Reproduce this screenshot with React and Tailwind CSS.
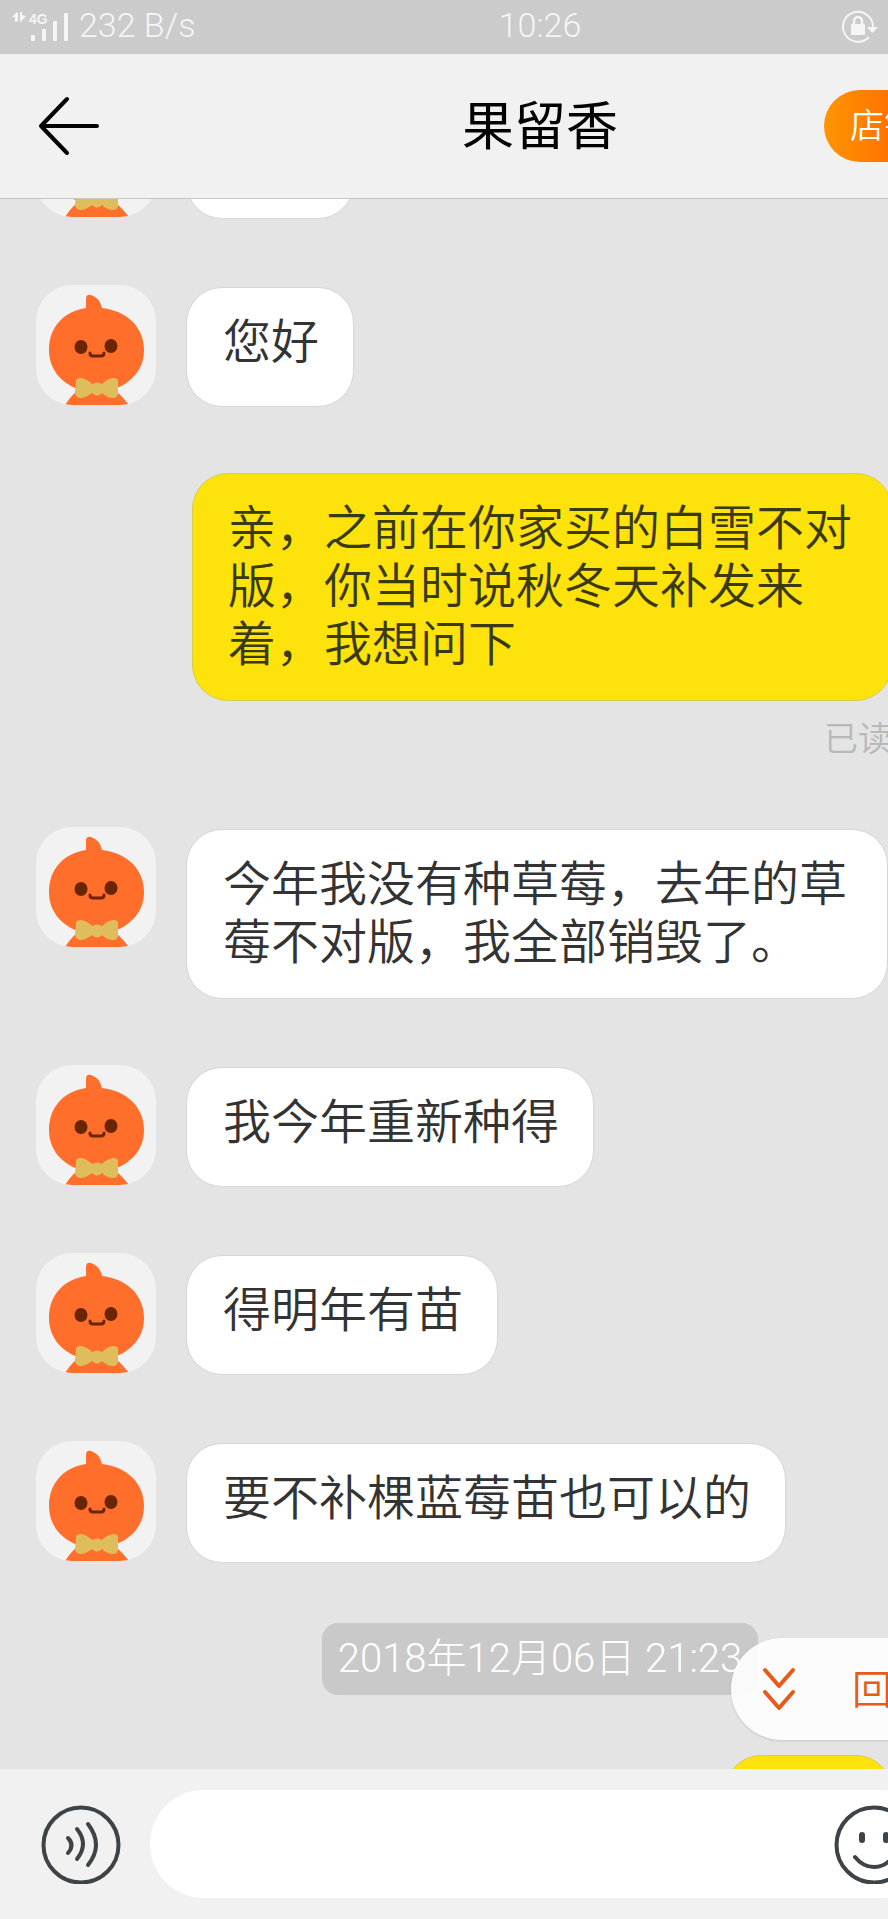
import React, { useState } from 'react';

const MESSAGES = [
  { id: 1, from: 'shop', text: '' },
  { id: 2, from: 'shop', text: '您好' },
  { id: 3, from: 'me', text: '亲，之前在你家买的白雪不对版，你当时说秋冬天补发来着，我想问下', read: true },
  { id: 4, from: 'shop', text: '今年我没有种草莓，去年的草莓不对版，我全部销毁了。' },
  { id: 5, from: 'shop', text: '我今年重新种得' },
  { id: 6, from: 'shop', text: '得明年有苗' },
  { id: 7, from: 'shop', text: '要不补棵蓝莓苗也可以的' },
];

function Avatar() {
  return (
    <svg viewBox="0 0 120 120" className="size-[120px] shrink-0 rounded-[36px] bg-[#f2f2f2]" aria-hidden="true">
      {/* body */}
      <path d="M29 120 Q38 106 48 102 L74 102 Q83 107 93 120 Z" fill="#ff6e2a" />
      {/* head and stem */}
      <path d="M50 23 L50 14 Q50 9 55 10 Q64 13 66 23 C91 26 108 42 108 65 C108 85 95 98 78 104 L42 104 C25 98 13 84 13 65 C13 41 29 26 50 23 Z" fill="#ff6e2a" />
      <ellipse cx="45" cy="62" rx="6.5" ry="7" fill="#6b2400" />
      <ellipse cx="75" cy="61" rx="6.5" ry="7" fill="#6b2400" />
      <path d="M54 68 Q54 71 57 71 L65 71 Q68 71 68 68" fill="none" stroke="#6b2400" strokeWidth="3" strokeLinecap="round" />
      {/* bow tie */}
      <path d="M40 98 Q39 93 45 93 Q51 94 56 99 Q61 96 66 99 Q71 94 77 93 Q83 93 82 98 L82 108 Q82 113 77 113 Q71 113 66 108 Q61 113 56 108 Q50 113 44 113 Q39 112 39 107 Z" fill="#e0bd5c" />
    </svg>
  );
}

function ShopMessage({ text }) {
  return (
    <li className="flex items-start gap-[30px] pl-9">
      <Avatar />
      <p className="mt-0.5 min-h-[120px] min-w-[168px] max-w-[702px] rounded-[36px] border border-[#d6d6d6] bg-white pt-[21px] pr-[34px] pb-[31px] pl-9 text-[48px] leading-[58px] text-[#333]">
        {text}
      </p>
    </li>
  );
}

function MyMessage({ text, read }) {
  return (
    <li className="flex flex-col items-end pr-[188px]">
      <p className="min-h-[120px] min-w-[167px] max-w-[700px] rounded-[36px] border border-[#d9cc4e] bg-[#fde20c] pt-[21px] pr-[33px] pb-[31px] pl-[35px] text-[48px] leading-[58px] text-[#3a3a10]">
        {text}
      </p>
      {read && <span className="mt-3 leading-[48px] text-[34px] text-[#b8b8b8]">已读</span>}
    </li>
  );
}

function StatusBar() {
  return (
    <div className="grid h-[54px] shrink-0 grid-cols-[1fr_auto_1fr] items-center bg-[#cbcbcb] font-[Roboto,sans-serif] text-[34px] leading-[50px] text-[#f5f5f5]">
      <div className="flex items-center gap-[9px] pl-3">
        <svg viewBox="0 0 58 32" className="h-8 w-[58px]" fill="currentColor" aria-hidden="true">
          <path d="M0 6 L5 1 V11 H3 V6 Z M8 1 H10 V4 L14 5 L9 11 H8 Z M5 2 H6 V10 H5 Z" />
          <text x="17" y="13" fontSize="14" fontWeight="700" fontFamily="Liberation Sans">4G</text>
          <rect x="19" y="24" width="4" height="6" rx="1" />
          <rect x="30" y="18" width="4" height="12" rx="1" />
          <rect x="41" y="10" width="4" height="20" rx="1" />
          <rect x="52" y="2" width="4" height="28" rx="1" />
        </svg>
        <span className="pb-1 font-light">232 B/s</span>
      </div>
      <span className="pb-1 font-light">10:26</span>
      <svg viewBox="0 0 38 34" className="mr-[201px] h-[34px] w-[38px] justify-self-end" fill="none" stroke="currentColor" aria-hidden="true">
        <path d="M28 27 A15 15 0 1 1 32 17" strokeWidth="2" />
        <path d="M26 17 H37 L31.500 23 Z" fill="currentColor" stroke="none" />
        <rect x="10" y="14" width="14" height="11" rx="1" fill="currentColor" stroke="none" />
        <path d="M13 15 V11 A4 4 0 0 1 21 11 V15" strokeWidth="2.500" />
      </svg>
    </div>
  );
}

export default function App() {
  const [draft, setDraft] = useState('');

  return (
    <div className="h-screen overflow-hidden bg-[#e4e4e4] font-['Noto_Sans_CJK_SC',sans-serif] font-[350]">
      <div className="flex h-full min-w-[1080px] flex-col">
        <StatusBar />

        {/* Header */}
        <header className="grid h-[145px] shrink-0 grid-cols-[1fr_auto_1fr] items-center border-b border-[#c8c8c8] bg-[#f1f1f1]">
          <button type="button" aria-label="返回" className="ml-[37px] justify-self-start">
            <svg viewBox="0 0 64 60" className="h-[60px] w-16" fill="none" stroke="#000" strokeWidth="4" strokeLinecap="round" strokeLinejoin="round">
              <path d="M30 3 L4 30 L30 57 M4 30 H60" />
            </svg>
          </button>
          <h1 className="pb-1.5 text-[52px] leading-[72px] font-normal text-black">果留香</h1>
          <button
            type="button"
            className="mr-[136px] h-[72px] w-[120px] justify-self-end rounded-full bg-linear-to-r from-[#ff9500] to-[#ff5000] pb-1 text-[34px] leading-[68px] text-white"
          >
            店铺
          </button>
        </header>

        {/* Messages */}
        <main className="relative min-h-0 flex-1 overflow-hidden">
          <ul className="-mt-[102px] flex flex-col gap-[66px]">
            {MESSAGES.map((m) =>
              m.from === 'me' ? (
                <MyMessage key={m.id} text={m.text} read={m.read} />
              ) : (
                <ShopMessage key={m.id} text={m.text} />
              )
            )}
          </ul>
          <div className="my-[60px] flex justify-center">
            <time
              dateTime="2018-12-06T21:23"
              className="rounded-2xl bg-[#c9c9c9] px-4 font-[Roboto,'Noto_Sans_CJK_SC',sans-serif] text-[40px] font-light leading-[72px] text-white"
            >
              2018年12月06日 21:23
            </time>
          </div>
          <ul>
            <MyMessage text="" />
          </ul>

          <button
            type="button"
            className="absolute right-0 bottom-[29px] flex h-[102px] w-[349px] items-center gap-[54px] rounded-l-full bg-white/90 pl-[29px] text-[40px] text-[#e85a18] shadow-sm"
          >
            <svg viewBox="0 0 38 48" className="h-12 w-[38px]" fill="none" stroke="currentColor" strokeWidth="4" strokeLinecap="round" strokeLinejoin="round" aria-hidden="true">
              <path d="M5 5 L19 21 L33 5 M5 27 L19 43 L33 27" />
            </svg>
            <span className="pb-1 leading-[60px]">回</span>
          </button>
        </main>

        {/* Composer */}
        <form className="flex h-[150px] shrink-0 items-center bg-[#f1f1f1] pr-[146px] pl-[41px] text-[#3d4347]">
          <button type="button" aria-label="语音" className="mr-[29px]">
            <svg viewBox="0 0 80 80" className="size-20" fill="none" stroke="currentColor" strokeWidth="4" strokeLinecap="round">
              <circle cx="40" cy="41" r="37.500" />
              <path d="M27 34 Q34 41 27 49 M36 25 Q48 40 36 55 M47 20 Q63 41 47 61" />
            </svg>
          </button>
          <div className="flex h-[108px] flex-1 items-center rounded-full bg-white pr-5 pl-10">
            <input
              aria-label="消息"
              value={draft}
              onChange={(e) => setDraft(e.target.value)}
              className="h-full min-w-0 flex-1 bg-transparent text-[48px] text-[#333] outline-none"
            />
            <button type="button" aria-label="表情">
              <svg viewBox="0 0 80 80" className="size-20" fill="none" stroke="currentColor" strokeWidth="4" strokeLinecap="round">
                <circle cx="40" cy="41" r="37.500" />
                <path d="M28 31 V36 M52 31 V36" strokeWidth="6" />
                <path d="M21 53 Q29 63 40 63 Q51 63 59 53" />
              </svg>
            </button>
          </div>
        </form>
      </div>
    </div>
  );
}
